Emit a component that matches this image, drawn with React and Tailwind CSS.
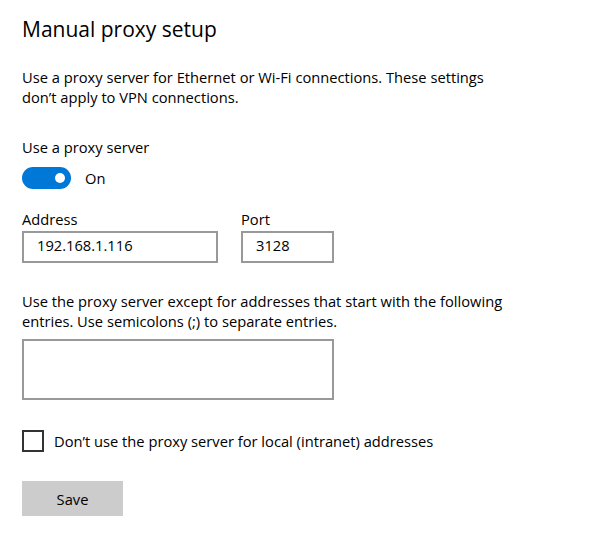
import { useState } from 'react'

const font = { fontFamily: '"Open Sans", "Noto Sans", sans-serif' }

function Toggle({ on, onChange }) {
  return (
    <button
      onClick={() => onChange(!on)}
      className={`relative w-[49px] h-[22px] rounded-full flex items-center shrink-0 ${on ? 'bg-[#0078d7] justify-end pr-[6px]' : 'bg-white border-2 border-[#333] justify-start pl-[4px]'}`}
    >
      <span className={`block w-[10px] h-[10px] rounded-full ${on ? 'bg-white' : 'bg-[#333]'}`} />
    </button>
  )
}

function TextBox({ value, className }) {
  return (
    <div className={`h-[32px] border-2 border-[#999] bg-white pl-[13px] pt-[2px] text-[14.7px] leading-[20px] text-black ${className}`}>
      {value}
    </div>
  )
}

export default function App() {
  const [useProxy, setUseProxy] = useState(true)
  const [bypassLocal, setBypassLocal] = useState(false)

  return (
    <div className="w-[600px] h-[538px] bg-white text-black px-[22px] pt-[15px] text-[14.7px] leading-[20px]" style={font}>
      <h1 className="text-[21px] leading-[28px] font-normal">Manual proxy setup</h1>

      <p className="mt-[24px] w-[490px]">
        Use a proxy server for Ethernet or Wi-Fi connections. These settings don’t apply to VPN connections.
      </p>

      <div className="mt-[30px]">Use a proxy server</div>
      <div className="mt-[10px] flex items-center gap-[14px]">
        <Toggle on={useProxy} onChange={setUseProxy} />
        <span>{useProxy ? 'On' : 'Off'}</span>
      </div>

      <div className="mt-[20px] flex gap-[23px]">
        <div className="flex flex-col">
          <span>Address</span>
          <TextBox value="192.168.1.116" className="mt-[2px] w-[196px]" />
        </div>
        <div className="flex flex-col">
          <span>Port</span>
          <TextBox value="3128" className="mt-[2px] w-[93px]" />
        </div>
      </div>

      <p className="mt-[28px] w-[500px]">
        Use the proxy server except for addresses that start with the following entries. Use semicolons (;) to separate entries.
      </p>
      <div className="mt-[8px] w-[312px] h-[61px] border-2 border-[#999] bg-white" />

      <label className="mt-[30px] flex items-center gap-[10px] cursor-pointer">
        <span
          onClick={() => setBypassLocal(!bypassLocal)}
          className={`w-[22px] h-[22px] border-2 flex items-center justify-center ${bypassLocal ? 'bg-[#0078d7] border-[#0078d7]' : 'bg-white border-[#333]'}`}
        >
          {bypassLocal && (
            <svg width="14" height="14" viewBox="0 0 14 14"><path d="M2 7l3.5 3.5L12 3" stroke="white" strokeWidth="1.6" fill="none" /></svg>
          )}
        </span>
        <span>Don’t use the proxy server for local (intranet) addresses</span>
      </label>

      <button className="mt-[29px] w-[101px] h-[35px] bg-[#cccccc] flex items-center justify-center">
        Save
      </button>
    </div>
  )
}
